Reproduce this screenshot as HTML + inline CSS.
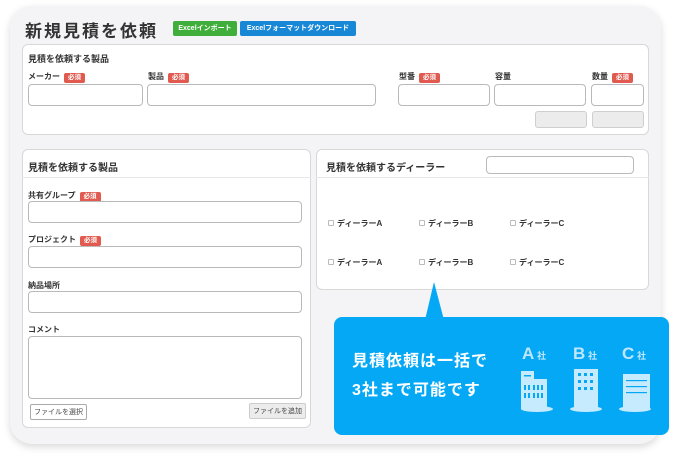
<!DOCTYPE html>
<html><head><meta charset="utf-8"><style>
*{box-sizing:border-box;margin:0;padding:0}
body{width:684px;height:455px;background:#fff;font-family:"Liberation Sans","Noto Sans CJK JP",sans-serif;position:relative;overflow:hidden;color:#333}
.a{position:absolute}
.card{left:10px;top:6px;width:651px;height:438px;background:#f4f4f6;border-radius:22px;box-shadow:0 3px 8px rgba(0,0,0,.15)}
.panel{background:#fff;border:1px solid #d8d8d8;border-radius:6px}
.lbl{font-size:8px;font-weight:bold;color:#333;white-space:nowrap}
.req{display:inline-block;background:#e05a4f;color:#fff;font-size:6.5px;padding:0 4px;border-radius:2px;margin-left:4px;line-height:10px;vertical-align:0}
.in{background:#fff;border:1px solid #b9b9b9;border-radius:4px}
.btn{background:#ececec;border:1px solid #cfcfcf;border-radius:3px}
.pt{font-size:10px;font-weight:bold;color:#333}
.cb{font-size:8px;font-weight:bold;color:#333;white-space:nowrap}
.cb i{display:inline-block;width:6px;height:6px;border:1px solid #bbb;border-radius:1px;margin-right:3px;vertical-align:0}
.fb{font-size:7px;color:#444;border:1px solid #aaa;border-radius:2px;padding:2px 3px;white-space:nowrap}
</style></head><body>
<div class="a card"></div>
<div class="a" style="left:25px;top:17px;font-size:17px;font-weight:bold;letter-spacing:2px;color:#333">新規見積を依頼</div>
<div class="a" style="left:173px;top:21px;width:64px;height:15px;background:#3fae3a;border-radius:2px;color:#fff;font-size:7px;font-weight:bold;line-height:15px;text-align:center">Excelインポート</div>
<div class="a" style="left:240px;top:21px;width:116px;height:15px;background:#1787d6;border-radius:2px;color:#fff;font-size:7px;font-weight:bold;line-height:15px;text-align:center">Excelフォーマットダウンロード</div>

<div class="a panel" style="left:22px;top:44px;width:627px;height:91px"></div>
<div class="a pt" style="left:28px;top:52px;font-size:9px">見積を依頼する製品</div>
<div class="a lbl" style="left:28px;top:71px">メーカー<span class="req">必須</span></div>
<div class="a lbl" style="left:148px;top:71px">製品<span class="req">必須</span></div>
<div class="a lbl" style="left:399px;top:71px">型番<span class="req">必須</span></div>
<div class="a lbl" style="left:495px;top:71px">容量</div>
<div class="a lbl" style="left:592px;top:71px">数量<span class="req">必須</span></div>
<div class="a in" style="left:28px;top:84px;width:115px;height:22px"></div>
<div class="a in" style="left:147px;top:84px;width:229px;height:22px"></div>
<div class="a in" style="left:398px;top:84px;width:92px;height:22px"></div>
<div class="a in" style="left:494px;top:84px;width:92px;height:22px"></div>
<div class="a in" style="left:591px;top:84px;width:53px;height:22px"></div>
<div class="a btn" style="left:535px;top:111px;width:52px;height:17px"></div>
<div class="a btn" style="left:592px;top:111px;width:52px;height:17px"></div>

<div class="a panel" style="left:22px;top:149px;width:289px;height:279px"></div>
<div class="a" style="left:22px;top:177px;width:289px;height:1px;background:#e6e6e6"></div>
<div class="a pt" style="left:28px;top:159px">見積を依頼する製品</div>
<div class="a lbl" style="left:28px;top:190px">共有グループ<span class="req">必須</span></div>
<div class="a in" style="left:28px;top:201px;width:274px;height:22px"></div>
<div class="a lbl" style="left:28px;top:234px">プロジェクト<span class="req">必須</span></div>
<div class="a in" style="left:28px;top:246px;width:274px;height:22px"></div>
<div class="a lbl" style="left:28px;top:280px">納品場所</div>
<div class="a in" style="left:28px;top:291px;width:274px;height:22px"></div>
<div class="a lbl" style="left:28px;top:324px">コメント</div>
<div class="a in" style="left:28px;top:336px;width:274px;height:63px"></div>
<div class="a fb" style="left:30px;top:404px;background:#fff">ファイルを選択</div>
<div class="a fb" style="left:249px;top:403px;background:#ececec;border-color:#ccc">ファイルを追加</div>

<div class="a panel" style="left:316px;top:149px;width:333px;height:141px"></div>
<div class="a" style="left:316px;top:177px;width:333px;height:1px;background:#e6e6e6"></div>
<div class="a pt" style="left:326px;top:159px">見積を依頼するディーラー</div>
<div class="a in" style="left:486px;top:156px;width:148px;height:18px"></div>
<div class="a cb" style="left:328px;top:218px"><i></i>ディーラーA</div>
<div class="a cb" style="left:419px;top:218px"><i></i>ディーラーB</div>
<div class="a cb" style="left:510px;top:218px"><i></i>ディーラーC</div>
<div class="a cb" style="left:328px;top:257px"><i></i>ディーラーA</div>
<div class="a cb" style="left:419px;top:257px"><i></i>ディーラーB</div>
<div class="a cb" style="left:510px;top:257px"><i></i>ディーラーC</div>

<svg class="a" style="left:420px;top:282px" width="30" height="40"><polygon points="14,0 24,38 5,38" fill="#05a8f5"/></svg>
<div class="a" style="left:334px;top:317px;width:335px;height:118px;background:#05a8f5;border-radius:8px"></div>
<div class="a" style="left:352px;top:347px;color:#fff;font-size:16px;font-weight:bold;line-height:29px;letter-spacing:1px">見積依頼は一括で<br>3社まで可能です</div>
<svg class="a" style="left:510px;top:340px" width="150" height="80">
<g fill="#bfe6ff" font-family="Liberation Sans,Noto Sans CJK JP,sans-serif" font-weight="bold">
<text x="12" y="19" font-size="17">A</text><text x="27" y="19" font-size="9">社</text>
<text x="63" y="19" font-size="17">B</text><text x="78" y="19" font-size="9">社</text>
<text x="112" y="19" font-size="17">C</text><text x="127" y="19" font-size="9">社</text>
</g>
<g fill="#c6ebff">
<ellipse cx="27" cy="69" rx="16" ry="3"/><rect x="11" y="31" width="13" height="38"/><rect x="21" y="39" width="16" height="30"/>
<ellipse cx="76" cy="69" rx="16" ry="3"/><rect x="64" y="29" width="24" height="40"/>
<ellipse cx="125" cy="69" rx="16" ry="3"/><rect x="113" y="34" width="27" height="35"/>
</g>
<g fill="#05a8f5">
<rect x="14" y="35" width="7" height="1.5"/>
<rect x="14" y="45" width="2" height="5"/><rect x="18" y="45" width="2" height="5"/><rect x="23" y="45" width="2" height="5"/><rect x="27" y="45" width="2" height="5"/><rect x="31" y="45" width="2" height="5"/>
<rect x="14" y="53" width="2" height="5"/><rect x="18" y="53" width="2" height="5"/><rect x="23" y="53" width="2" height="5"/><rect x="27" y="53" width="2" height="5"/><rect x="31" y="53" width="2" height="5"/>
<rect x="68" y="33" width="3" height="3"/><rect x="74" y="33" width="3" height="3"/><rect x="80" y="33" width="3" height="3"/>
<rect x="68" y="40" width="3" height="3"/><rect x="74" y="40" width="3" height="3"/><rect x="80" y="40" width="3" height="3"/>
<rect x="68" y="47" width="3" height="3"/><rect x="74" y="47" width="3" height="3"/><rect x="80" y="47" width="3" height="3"/>
<rect x="116" y="40" width="21" height="1.2"/><rect x="116" y="46" width="21" height="1.2"/><rect x="116" y="52" width="21" height="1.2"/>
</g>
</svg>
</body></html>
